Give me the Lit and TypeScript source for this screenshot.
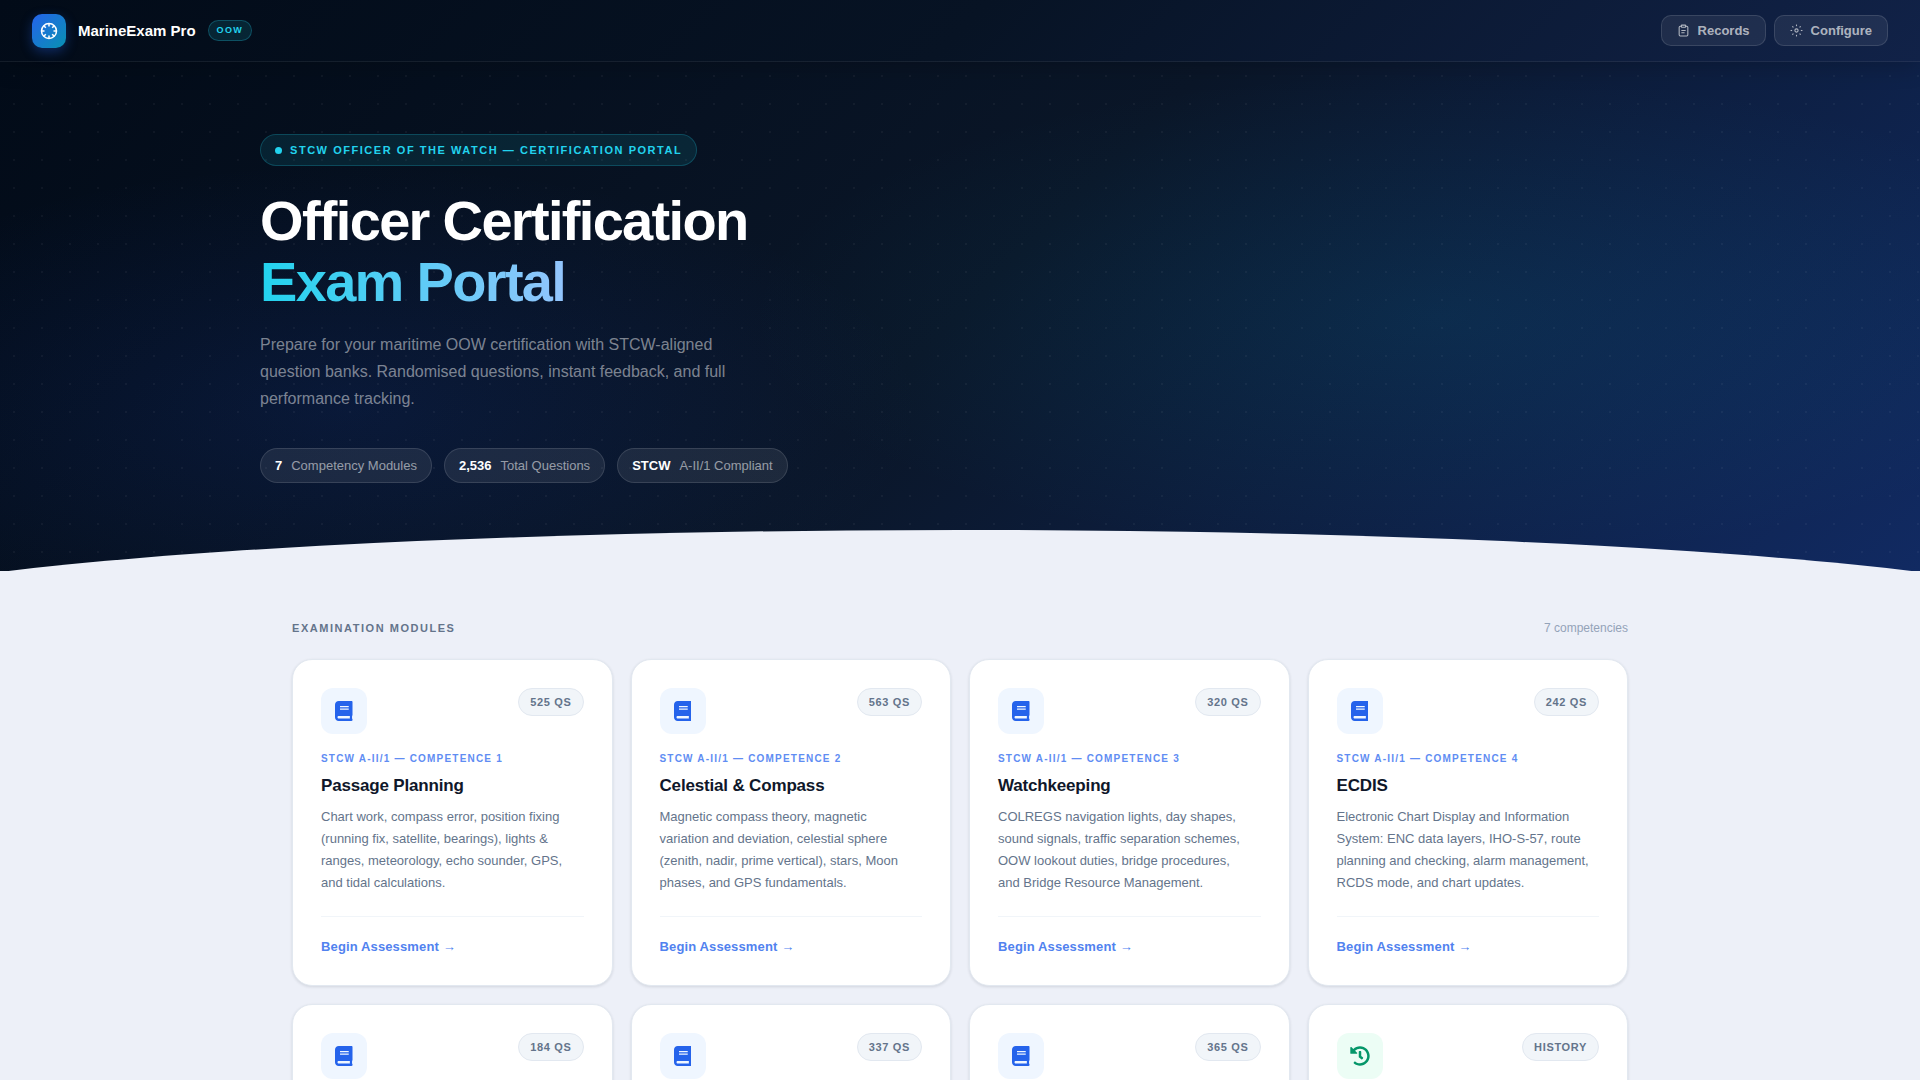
import { LitElement, html, svg, css, nothing } from "lit";
import { customElement, property } from "lit/decorators.js";

interface ExamModule {
  badge: string;
  icon: "book" | "history";
  label?: string;
  title?: string;
  text?: string;
}

const MODULES: ExamModule[] = [
  {
    badge: "525 QS",
    icon: "book",
    label: "STCW A-II/1 — COMPETENCE 1",
    title: "Passage Planning",
    text: "Chart work, compass error, position fixing (running fix, satellite, bearings), lights & ranges, meteorology, echo sounder, GPS, and tidal calculations.",
  },
  {
    badge: "563 QS",
    icon: "book",
    label: "STCW A-II/1 — COMPETENCE 2",
    title: "Celestial & Compass",
    text: "Magnetic compass theory, magnetic variation and deviation, celestial sphere (zenith, nadir, prime vertical), stars, Moon phases, and GPS fundamentals.",
  },
  {
    badge: "320 QS",
    icon: "book",
    label: "STCW A-II/1 — COMPETENCE 3",
    title: "Watchkeeping",
    text: "COLREGS navigation lights, day shapes, sound signals, traffic separation schemes, OOW lookout duties, bridge procedures, and Bridge Resource Management.",
  },
  {
    badge: "242 QS",
    icon: "book",
    label: "STCW A-II/1 — COMPETENCE 4",
    title: "ECDIS",
    text: "Electronic Chart Display and Information System: ENC data layers, IHO-S-57, route planning and checking, alarm management, RCDS mode, and chart updates.",
  },
  { badge: "184 QS", icon: "book" },
  { badge: "337 QS", icon: "book" },
  { badge: "365 QS", icon: "book" },
  { badge: "HISTORY", icon: "history" },
];

const STATS = [
  { value: "7", label: "Competency Modules" },
  { value: "2,536", label: "Total Questions" },
  { value: "STCW", label: "A-II/1 Compliant" },
];

const SPOKES = [0, 45, 90, 135, 180, 225, 270, 315];

const wheelIcon = html`<svg class="wheel" viewBox="0 0 24 24" aria-hidden="true">
  <circle cx="12" cy="12" r="10" />
  ${SPOKES.map((a) => svg`<path d="M12 2v4" transform="rotate(${a} 12 12)" />`)}
</svg>`;

const clipboardIcon = html`<svg class="line-icon" viewBox="0 0 24 24" aria-hidden="true">
  <path d="M16 4h2a2 2 0 0 1 2 2v14a2 2 0 0 1-2 2H6a2 2 0 0 1-2-2V6a2 2 0 0 1 2-2h2" />
  <rect x="8" y="2" width="8" height="4" rx="1" />
  <path d="M8 12h8M8 16h6" />
</svg>`;

const gearIcon = html`<svg class="line-icon" viewBox="0 0 24 24" aria-hidden="true">
  <circle cx="12" cy="12" r="3" />
  ${SPOKES.map((a) => svg`<path d="M12 1v3" transform="rotate(${a} 12 12)" />`)}
</svg>`;

const bookIcon = html`<svg viewBox="0 0 448 512" aria-hidden="true">
  <path
    d="M448 360V24c0-13.3-10.7-24-24-24H96C43 0 0 43 0 96v320c0 53 43 96 96 96h328c13.3 0 24-10.7 24-24v-16c0-7.5-3.5-14.3-8.9-18.7-4.2-15.4-4.2-59.3 0-74.7 5.4-4.3 8.9-11.1 8.9-18.6zM128 134c0-3.3 2.7-6 6-6h212c3.3 0 6 2.7 6 6v20c0 3.3-2.7 6-6 6H134c-3.3 0-6-2.7-6-6v-20zm0 64c0-3.3 2.7-6 6-6h212c3.3 0 6 2.7 6 6v20c0 3.3-2.7 6-6 6H134c-3.3 0-6-2.7-6-6v-20zm253.4 250H96c-17.7 0-32-14.3-32-32 0-17.6 14.4-32 32-32h285.4c-1.9 17.1-1.9 46.9 0 64z"
  />
</svg>`;

const historyIcon = html`<svg viewBox="0 0 512 512" aria-hidden="true">
  <path
    d="M504 255.531c.253 136.64-111.18 248.372-247.82 248.468-59.015.042-113.223-20.53-155.822-54.911-11.077-8.94-11.905-25.541-1.839-35.607l11.267-11.267c8.609-8.609 22.353-9.551 31.891-1.984C173.062 425.135 212.781 440 256 440c101.705 0 184-82.311 184-184 0-101.705-82.311-184-184-184-48.814 0-93.149 18.969-126.068 49.932l50.754 50.754c10.08 10.08 2.941 27.314-11.313 27.314H24c-8.837 0-16-7.163-16-16V38.627c0-14.254 17.234-21.393 27.314-11.314l49.372 49.372C129.209 34.136 189.552 8 256 8c136.81 0 247.747 110.78 248 247.531zm-180.912 78.784l9.823-12.63c8.138-10.463 6.253-25.542-4.21-33.679L288 256.349V152c0-13.255-10.745-24-24-24h-16c-13.255 0-24 10.745-24 24v135.651l65.409 50.874c10.463 8.137 25.541 6.253 33.679-4.21z"
  />
</svg>`;

@customElement("exam-card")
export class ExamCard extends LitElement {
  @property({ attribute: false }) module!: ExamModule;

  static styles = css`
    :host {
      display: flex;
      min-width: 0;
    }
    .card {
      flex: 1;
      min-width: 0;
      display: flex;
      flex-direction: column;
      box-sizing: border-box;
      padding: 28px;
      background: #fff;
      border: 1px solid #e2e8f0;
      border-radius: 20px;
      box-shadow: 0 1px 3px rgba(15, 23, 42, 0.12);
    }
    .head {
      display: flex;
      justify-content: space-between;
      align-items: flex-start;
      margin-bottom: 18px;
    }
    .tile {
      width: 46px;
      height: 46px;
      border-radius: 12px;
      display: grid;
      place-items: center;
      background: #eff6ff;
      color: #2563eb;
    }
    .tile.history {
      background: #ecfdf5;
      color: #059669;
    }
    .tile svg {
      height: 20px;
      fill: currentColor;
    }
    .badge {
      padding: 0 11px;
      line-height: 26px;
      font-size: 11px;
      font-weight: 700;
      letter-spacing: 0.06em;
      color: #64748b;
      background: #f1f5f9;
      border: 1px solid #e2e8f0;
      border-radius: 14px;
    }
    .label {
      font-size: 10px;
      line-height: 14px;
      font-weight: 700;
      letter-spacing: 0.12em;
      color: #5f8df3;
    }
    .title {
      margin: 8px 0;
      font-size: 17px;
      line-height: 24px;
      font-weight: 700;
      letter-spacing: -0.01em;
      color: #0f172a;
    }
    .text {
      flex: 1;
      margin: 0;
      padding-right: 8px;
      font-size: 13px;
      line-height: 22px;
      color: #64748b;
    }
    .foot {
      margin-top: 22px;
      padding-top: 19px;
      border-top: 1px solid #f1f5f9;
      line-height: 20px;
    }
    .begin {
      font-size: 13px;
      font-weight: 700;
      letter-spacing: 0.01em;
      color: #5182ef;
      text-decoration: none;
    }
  `;

  render() {
    const m = this.module;
    return html`<article class="card">
      <div class="head">
        <span class="tile ${m.icon}">${m.icon === "book" ? bookIcon : historyIcon}</span>
        <span class="badge">${m.badge}</span>
      </div>
      ${m.title
        ? html`<div class="label">${m.label}</div>
            <h3 class="title">${m.title}</h3>
            <p class="text">${m.text}</p>
            <div class="foot"><a class="begin" href="#">Begin Assessment →</a></div>`
        : nothing}
    </article>`;
  }
}

@customElement("app-root")
export class AppRoot extends LitElement {
  static styles = css`
    :host {
      display: block;
      min-height: 100vh;
      background: #edf0f8;
      font-family: "Liberation Sans", Arial, sans-serif;
      color: #0f172a;
    }
    .topbar {
      position: relative;
      z-index: 1;
      display: flex;
      align-items: center;
      justify-content: space-between;
      box-sizing: border-box;
      height: 62px;
      padding: 0 32px;
      background: linear-gradient(135deg, #020b18 0%, #071324 50%, #112248 100%);
      border-bottom: 1px solid rgba(255, 255, 255, 0.07);
      box-shadow: 0 4px 24px rgba(0, 0, 0, 0.2);
    }
    .brand,
    .actions,
    .action,
    .pill,
    .stats,
    .stat {
      display: flex;
      align-items: center;
    }
    .brand {
      gap: 12px;
    }
    .logo {
      width: 34px;
      height: 34px;
      display: grid;
      place-items: center;
      border-radius: 10px;
      background: linear-gradient(135deg, #2563eb, #0891b2);
      box-shadow: 0 4px 12px rgba(37, 99, 235, 0.35);
    }
    .wheel {
      width: 18px;
      height: 18px;
      fill: none;
      stroke: #fff;
      stroke-width: 2;
    }
    .name {
      font-size: 15px;
      font-weight: 700;
      color: #fff;
    }
    .tag {
      padding: 0 8px;
      line-height: 19px;
      font-size: 9px;
      font-weight: 700;
      letter-spacing: 0.15em;
      color: #22d3ee;
      background: rgba(34, 211, 238, 0.12);
      border: 1px solid rgba(34, 211, 238, 0.25);
      border-radius: 11px;
    }
    .actions {
      gap: 8px;
    }
    .action {
      gap: 8px;
      height: 31px;
      padding: 0 15px;
      font: 700 13px "Liberation Sans", Arial, sans-serif;
      color: rgba(255, 255, 255, 0.65);
      background: rgba(255, 255, 255, 0.07);
      border: 1px solid rgba(255, 255, 255, 0.12);
      border-radius: 10px;
    }
    .line-icon {
      width: 13px;
      height: 13px;
      fill: none;
      stroke: currentColor;
      stroke-width: 2;
    }
    .hero {
      position: relative;
      overflow: hidden;
      padding: 72px 32px 88px;
      background:
        radial-gradient(circle, rgba(255, 255, 255, 0.045) 1px, transparent 1px) 0 0 / 28px 28px,
        radial-gradient(ellipse 60% 80% at 75% 50%, rgba(8, 145, 178, 0.12), transparent 60%),
        radial-gradient(ellipse 50% 80% at 18% 68%, rgba(29, 78, 216, 0.13), transparent 60%),
        linear-gradient(135deg, #020b18 0%, #0a1628 50%, #112a62 100%);
    }
    .swell {
      position: absolute;
      left: -10%;
      right: -10%;
      bottom: -53px;
      height: 94px;
      background: #edf0f8;
      border-radius: 50% 50% 0 0 / 100% 100% 0 0;
    }
    .intro {
      position: relative;
      max-width: 1400px;
      margin: 0 auto;
    }
    .pill {
      width: fit-content;
      gap: 8px;
      padding: 0 14px;
      line-height: 30px;
      font-size: 11px;
      font-weight: 700;
      letter-spacing: 0.14em;
      color: #22d3ee;
      background: rgba(34, 211, 238, 0.1);
      border: 1px solid rgba(34, 211, 238, 0.22);
      border-radius: 16px;
    }
    .dot {
      width: 7px;
      height: 7px;
      border-radius: 50%;
      background: #22d3ee;
    }
    .headline {
      margin: 24px 0 19px;
      font-size: 56px;
      line-height: 61px;
      font-weight: 700;
      letter-spacing: -0.03em;
      color: #fff;
    }
    .accent {
      display: block;
      width: fit-content;
      background: linear-gradient(90deg, #22d3ee, #93c5fd);
      background-clip: text;
      -webkit-background-clip: text;
      color: transparent;
    }
    .lead {
      max-width: 500px;
      margin: 0 0 36px;
      font-size: 16px;
      line-height: 27px;
      color: rgba(255, 255, 255, 0.48);
    }
    .stats {
      gap: 12px;
      flex-wrap: wrap;
    }
    .stat {
      gap: 9px;
      padding: 0 14px;
      line-height: 33px;
      font-size: 13px;
      color: rgba(255, 255, 255, 0.55);
      background: rgba(255, 255, 255, 0.08);
      border: 1px solid rgba(255, 255, 255, 0.12);
      border-radius: 18px;
    }
    .stat b {
      color: #fff;
    }
    .modules {
      max-width: 1336px;
      margin: 0 auto;
      padding: 48px 32px;
    }
    .section-head {
      display: flex;
      justify-content: space-between;
      align-items: center;
      margin-bottom: 22px;
      line-height: 18px;
    }
    .section-title {
      margin: 0;
      font-size: 11px;
      font-weight: 700;
      letter-spacing: 0.14em;
      color: #64748b;
    }
    .count {
      font-size: 12px;
      color: #94a3b8;
    }
    .grid {
      display: grid;
      grid-template-columns: repeat(4, 1fr);
      grid-auto-rows: 1fr;
      gap: 18px;
    }
  `;

  render() {
    return html`
      <header class="topbar">
        <div class="brand">
          <span class="logo">${wheelIcon}</span>
          <span class="name">MarineExam Pro</span>
          <span class="tag">OOW</span>
        </div>
        <nav class="actions">
          <button class="action" type="button">${clipboardIcon}Records</button>
          <button class="action" type="button">${gearIcon}Configure</button>
        </nav>
      </header>
      <section class="hero">
        <div class="swell"></div>
        <div class="intro">
          <div class="pill"><span class="dot"></span>STCW OFFICER OF THE WATCH — CERTIFICATION PORTAL</div>
          <h1 class="headline">Officer Certification<span class="accent">Exam Portal</span></h1>
          <p class="lead">
            Prepare for your maritime OOW certification with STCW-aligned question banks. Randomised questions,
            instant feedback, and full performance tracking.
          </p>
          <div class="stats">
            ${STATS.map((s) => html`<div class="stat"><b>${s.value}</b><span>${s.label}</span></div>`)}
          </div>
        </div>
      </section>
      <main class="modules">
        <div class="section-head">
          <h2 class="section-title">EXAMINATION MODULES</h2>
          <span class="count">7 competencies</span>
        </div>
        <div class="grid">${MODULES.map((m) => html`<exam-card .module=${m}></exam-card>`)}</div>
      </main>
    `;
  }
}
